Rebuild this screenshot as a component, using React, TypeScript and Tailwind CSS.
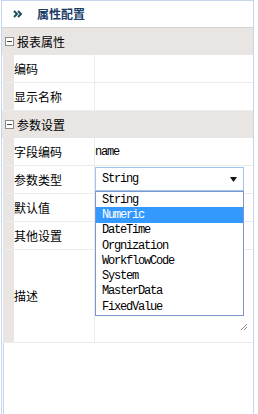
const cjk = { fontFamily: '"Noto Sans CJK SC", "Noto Sans", sans-serif' };
const mono = { fontFamily: '"Liberation Mono", "DejaVu Sans Mono", monospace' };

const options = ['String', 'Numeric', 'DateTime', 'Orgnization', 'WorkflowCode', 'System', 'MasterData', 'FixedValue'];

function Section({ title }: { title: string }) {
  return (
    <div className="h-[27px] flex items-center bg-[#e8e5e3]">
      <div className="ml-[3px] w-[9px] h-[9px] border border-[#8a8a8a] bg-white flex items-center justify-center">
        <div className="w-[5px] h-px bg-[#444]" />
      </div>
      <span className="ml-[3px] text-[12px] text-black" style={cjk}>{title}</span>
    </div>
  );
}

function Row({ label, h = 'h-[28px]', children }: { label: string; h?: string; children?: React.ReactNode }) {
  return (
    <div className={`flex ${h} border-b border-[#ececec]`}>
      <div className="w-[11px] ml-px bg-[#e8e5e3] shrink-0" />
      <div className="w-[81px] shrink-0 flex items-center border-r border-[#ececec] text-[12px] text-black" style={cjk}>
        {label}
      </div>
      <div className="flex-1 flex items-center relative">{children}</div>
    </div>
  );
}

export default function App() {
  return (
    <div className="w-[258px] h-[414px] bg-white overflow-hidden">
      <div className="ml-px w-[253px] h-[414px] border-l border-r border-t border-[#c5d6ee] flex flex-col">
        {/* header */}
        <div className="h-[27px] shrink-0 flex items-center border-b border-[#d4d4d4]">
          <svg className="ml-[11px]" width="10" height="8" viewBox="0 0 10 8">
            <path d="M1 1 L4 4 L1 7 M5 1 L8 4 L5 7" fill="none" stroke="#1d4e5a" strokeWidth="2" />
          </svg>
          <span className="ml-[14px] text-[12px] font-bold text-[#1b3c68]" style={cjk}>属性配置</span>
        </div>

        <div className="flex-1 flex flex-col">
          <Section title="报表属性" />
          <Row label="编码" />
          <Row label="显示名称" />
          <Section title="参数设置" />
          <Row label="字段编码">
            <span className="text-[12px] tracking-[-1.2px] text-black" style={mono}>name</span>
          </Row>
          <Row label="参数类型">
            <div className="absolute left-0 top-[1px] w-[149px] h-[24px] border border-[#9fc3f3] bg-white flex items-center pl-[6px] pr-[6px]">
              <span className="flex-1 text-[12px] tracking-[-1.2px] text-black" style={mono}>String</span>
              <svg width="7" height="5" viewBox="0 0 7 5">
                <path d="M0 0 H7 L3.5 5 Z" fill="#111" />
              </svg>
            </div>
            <div className="absolute left-0 top-[25px] z-10 w-[149px] border border-[#7c97c9] bg-white pb-[1px]">
              {options.map((o) => (
                <div
                  key={o}
                  className={`h-[15.3px] flex items-center pl-[6px] text-[12px] tracking-[-1.2px] ${o === 'Numeric' ? 'bg-[#3399ff] text-white' : 'text-black'}`}
                  style={mono}
                >
                  {o}
                </div>
              ))}
            </div>
          </Row>
          <Row label="默认值" />
          <Row label="其他设置" />
          <Row label="描述" h="h-[93px]">
            <svg className="absolute left-[145px] top-[73px]" width="8" height="8" viewBox="0 0 8 8">
              <path d="M1 7 L7 1 M4 7 L7 4" stroke="#888" strokeWidth="1" />
            </svg>
          </Row>
          <div className="flex-1 ml-[1px] border-l border-[#c5d6ee]" />
        </div>
      </div>
    </div>
  );
}
